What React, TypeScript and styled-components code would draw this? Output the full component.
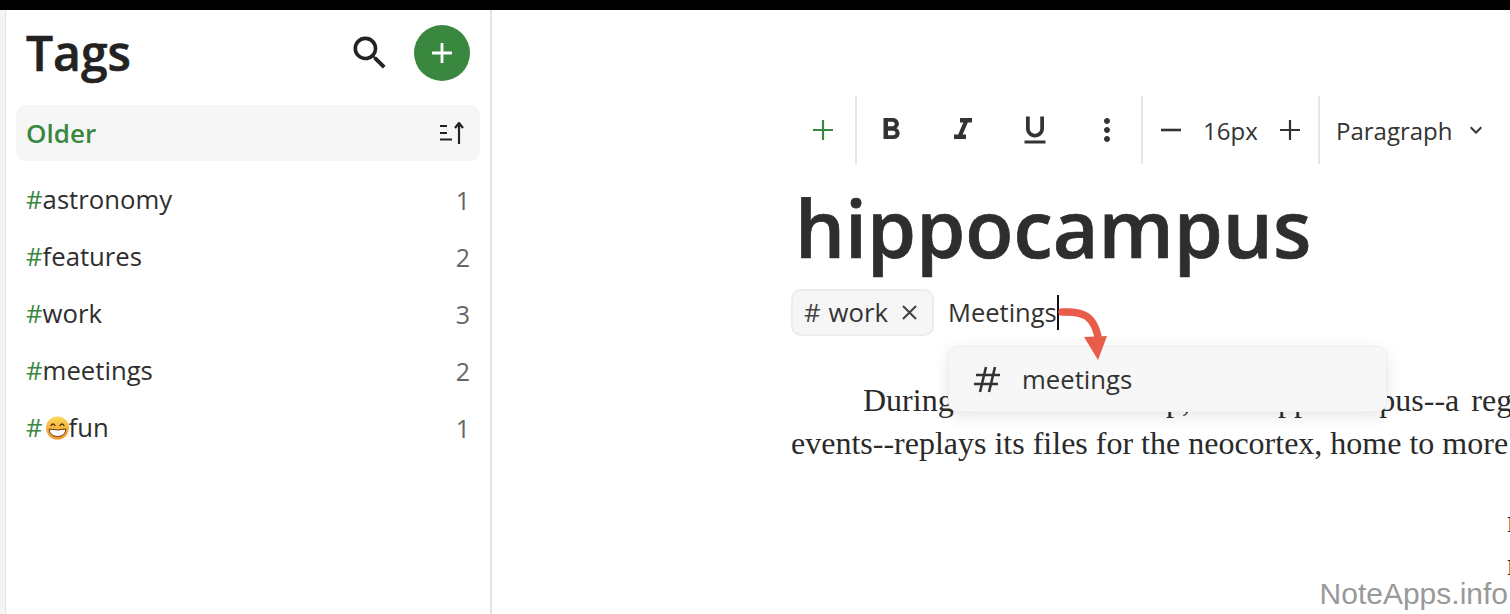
import React from "react";
import styled, { createGlobalStyle } from "styled-components";
import { MdFormatBold, MdFormatItalic, MdFormatUnderlined, MdMoreVert, MdSearch, MdKeyboardArrowDown, MdAdd, MdClose } from "react-icons/md";

const Global = createGlobalStyle`
  html, body { margin: 0; padding: 0; height: 100%; overflow: hidden; background: #fff; }
  #root { height: 100%; }
  * { box-sizing: border-box; }
`;

const green = "#3a873f";
const ink = "#2b2b2b";

const Page = styled.div`
  position: relative;
  width: 1510px;
  height: 614px;
  overflow: hidden;
  font-family: "Open Sans", sans-serif;
  color: ${ink};
  background: #fff;
  display: flex;
  flex-direction: column;
`;
const TopStrip = styled.div`
  height: 10px;
  flex: none;
  background: #000;
`;
const Body = styled.div`
  flex: 1;
  display: flex;
  min-height: 0;
`;
const Rail = styled.div`
  width: 6px;
  flex: none;
  background: #f4f4f4;
  border-right: 1px solid #e4e4e4;
`;
const Sidebar = styled.aside`
  width: 486px;
  flex: none;
  border-right: 2px solid #e4e4e4;
  padding: 15px 10px 0 10px;
  display: flex;
  flex-direction: column;
`;
const SideHeader = styled.header`
  height: 56px;
  display: flex;
  align-items: center;
  padding-left: 10px;
  padding-right: 10px;
`;
const Title = styled.h1`
  margin: 0;
  font-size: 48px;
  font-weight: 600;
  -webkit-text-stroke: 0.6px #222;
  line-height: 56px;
  color: #222;
  flex: 1;
`;
const SearchIcon = styled(MdSearch)`
  font-size: 44px;
  color: #222;
  margin-right: 22px;
`;
const AddCircle = styled.div`
  width: 56px;
  height: 56px;
  border-radius: 50%;
  background: ${green};
  color: #fff;
  display: flex;
  align-items: center;
  justify-content: center;
  font-size: 34px;
`;
const SortRow = styled.div`
  margin-top: 24px;
  height: 56px;
  border-radius: 10px;
  background: #f6f6f6;
  display: flex;
  align-items: center;
  justify-content: space-between;
  padding: 0 16px 0 10px;
`;
const SortLabel = styled.span`
  font-size: 26px;
  font-weight: 600;
  color: ${green};
`;
const TagList = styled.ul`
  list-style: none;
  margin: 10px 0 0;
  padding: 0;
`;
const TagRow = styled.li`
  height: 57px;
  display: flex;
  align-items: center;
  justify-content: space-between;
  padding: 0 10px 0 10px;
  font-size: 25.7px;
  color: #2e2e2e;
`;
const TagName = styled.span`
  display: inline-flex;
  align-items: center;
`;
const Hash = styled.span`
  color: ${green};
`;
const Count = styled.span`
  color: #666;
  font-size: 25px;
  padding-top: 1px;
`;
const Main = styled.main`
  flex: 1;
  min-width: 0;
  padding: 86px 0 0 299px;
  display: flex;
  flex-direction: column;
  overflow: hidden;
`;
const Toolbar = styled.div`
  display: flex;
  align-items: center;
  height: 68px;
  width: 719px;
  color: #333;
`;
const ToolGroup = styled.div<{ $w: number; $pad: number; $gap: number; $last?: boolean }>`
  width: ${(p) => p.$w}px;
  flex: none;
  height: 68px;
  display: flex;
  align-items: center;
  padding-left: ${(p) => p.$pad}px;
  gap: ${(p) => p.$gap}px;
  border-right: ${(p) => (p.$last ? "none" : "2px solid #e6e6e6")};
`;
const ToolIcon = styled.span<{ $size?: number }>`
  display: inline-flex;
  font-size: ${(p) => p.$size ?? 36}px;
  color: #333;
`;
const SizeText = styled.span`
  font-size: 24px;
  color: #333;
`;
const BlockLabel = styled.span`
  font-size: 24px;
  color: #333;
`;
const DocTitle = styled.h2`
  margin: 10px 0 0 4px;
  font-size: 78.9px;
  font-weight: 600;
  -webkit-text-stroke: 0.7px #2e2e2e;
  line-height: 108px;
  color: #2e2e2e;
  white-space: nowrap;
`;
const TagLine = styled.div`
  position: relative;
  display: flex;
  align-items: center;
  height: 47px;
  margin-top: 7px;
`;
const Chip = styled.div`
  width: 143px;
  height: 47px;
  flex: none;
  border: 2px solid #ececec;
  border-radius: 10px;
  background: #f6f6f6;
  display: flex;
  align-items: center;
  padding-left: 11px;
  font-size: 25.7px;
  color: #333;
`;
const ChipHash = styled.span`
  margin-right: 8px;
  color: #444;
`;
const ChipClose = styled(MdClose)`
  margin-left: 9px;
  font-size: 25px;
  color: #444;
`;
const TagInput = styled.div`
  margin-left: 14px;
  font-size: 25.5px;
  color: #333;
  border-right: 2px solid #111;
  line-height: 35px;
  height: 35px;
`;
const Arrow = styled.svg`
  position: absolute;
  left: 266px;
  top: 16px;
  width: 64px;
  height: 60px;
  z-index: 3;
`;
const Menu = styled.div`
  position: absolute;
  left: 157px;
  top: 57px;
  width: 439px;
  height: 66px;
  background: #f7f7f7;
  border: 1px solid #eee;
  border-radius: 10px;
  box-shadow: 0 4px 16px rgba(0, 0, 0, 0.1);
  display: flex;
  align-items: center;
  padding-left: 24px;
  font-size: 25.7px;
  color: #333;
  z-index: 2;
`;
const MenuText = styled.span`
  margin-left: 21px;
`;
const Prose = styled.div`
  margin-top: 43px;
  width: 1100px;
  font-family: "Liberation Serif", serif;
  font-size: 32px;
  line-height: 43px;
  color: #2a2a2a;
  white-space: nowrap;
`;
const Indent = styled.div`
  padding-left: 72px;
  word-spacing: 4px;
`;
const Verse = styled.div`
  padding-left: 716px;
`;
const VerseBlock = styled.div`
  margin-top: 35px;
`;
const Watermark = styled.div`
  position: absolute;
  right: 2px;
  bottom: 3px;
  font-family: "Liberation Sans", sans-serif;
  font-size: 30px;
  color: #999;
  z-index: 4;
`;

const LinePlus = ({ color = "#333" }: { color?: string }) => (
  <svg width="20" height="20" viewBox="0 0 20 20" fill="none" stroke={color} strokeWidth="2.200">
    <path d="M0 10h20M10 0v20" />
  </svg>
);
const LineMinus = () => (
  <svg width="20" height="20" viewBox="0 0 20 20" fill="none" stroke="#333" strokeWidth="2.600">
    <path d="M0 10h20" />
  </svg>
);
const SortIcon = () => (
  <svg width="24" height="22" viewBox="0 0 24 22" fill="none" stroke="#222" strokeWidth="2.200">
    <path d="M0 4h7M0 11h7M0 17.500h12" />
    <path d="M19 22V1M15 6l4-5 4 5" />
  </svg>
);
const HashGlyph = () => (
  <svg width="28" height="28" viewBox="0 0 28 28" fill="none" stroke="#333" strokeWidth="2.600">
    <path d="M3 10h24M1 19h24M13 2L7 27M22 2L16 27" />
  </svg>
);
const Grin = () => (
  <svg width="26" height="26" viewBox="0 0 26 26">
    <defs>
      <linearGradient id="g" x1="0" y1="0" x2="0" y2="1">
        <stop offset="0" stopColor="#fbd75a" />
        <stop offset="1" stopColor="#ef9428" />
      </linearGradient>
    </defs>
    <circle cx="14.500" cy="13" r="11.500" fill="url(#g)" />
    <path d="M8 10.500q2-3 4 0M17 10.500q2-3 4 0" fill="none" stroke="#4a3210" strokeWidth="1.300" strokeLinecap="round" />
    <path d="M6 14q8.500 2 17 0q-1 7.500-8.500 7.500t-8.500-7.500z" fill="#fff" stroke="#6b3e10" strokeWidth="1" />
  </svg>
);

const tags: { name: React.ReactNode; count: number }[] = [
  { name: "astronomy", count: 1 },
  { name: "features", count: 2 },
  { name: "work", count: 3 },
  { name: "meetings", count: 2 },
  { name: <><Grin />fun</>, count: 1 },
];

export default function App() {
  return (
    <Page>
      <Global />
      <TopStrip />
      <Body>
        <Rail />
        <Sidebar>
          <SideHeader>
            <Title>Tags</Title>
            <SearchIcon />
            <AddCircle><MdAdd /></AddCircle>
          </SideHeader>
          <SortRow>
            <SortLabel>Older</SortLabel>
            <SortIcon />
          </SortRow>
          <TagList>
            {tags.map((t, i) => (
              <TagRow key={i}>
                <TagName><Hash>#</Hash>{t.name}</TagName>
                <Count>{t.count}</Count>
              </TagRow>
            ))}
          </TagList>
        </Sidebar>
        <Main>
          <Toolbar>
            <ToolGroup $w={66} $pad={22} $gap={0}><LinePlus color={green} /></ToolGroup>
            <ToolGroup $w={286} $pad={16} $gap={36}>
              <ToolIcon><MdFormatBold /></ToolIcon>
              <ToolIcon><MdFormatItalic /></ToolIcon>
              <ToolIcon><MdFormatUnderlined /></ToolIcon>
              <ToolIcon><MdMoreVert /></ToolIcon>
            </ToolGroup>
            <ToolGroup $w={177} $pad={18} $gap={22}>
              <LineMinus />
              <SizeText>16px</SizeText>
              <LinePlus />
            </ToolGroup>
            <ToolGroup $w={190} $pad={16} $gap={11} $last>
              <BlockLabel>Paragraph</BlockLabel>
              <ToolIcon $size={24}><MdKeyboardArrowDown /></ToolIcon>
            </ToolGroup>
          </Toolbar>
          <DocTitle>hippocampus</DocTitle>
          <TagLine>
            <Chip><ChipHash>#</ChipHash>work<ChipClose /></Chip>
            <TagInput>Meetings</TagInput>
            <Arrow viewBox="0 0 64 60">
              <path d="M5 7 C26 6 38 10 42 37" fill="none" stroke="#e85c4a" strokeWidth="7.500" strokeLinecap="round" />
              <path d="M27 32 L50 31 L41 55 Z" fill="#e85c4a" />
            </Arrow>
            <Menu>
              <HashGlyph />
              <MenuText>meetings</MenuText>
            </Menu>
          </TagLine>
          <Prose>
            <Indent>During slow-wave sleep, the hippocampus--a region of the</Indent>
            <div>events--replays its files for the neocortex, home to more of our</div>
            <VerseBlock>
              <Verse>memory</Verse>
              <Verse>recall</Verse>
            </VerseBlock>
          </Prose>
        </Main>
      </Body>
      <Watermark>NoteApps.info</Watermark>
    </Page>
  );
}
